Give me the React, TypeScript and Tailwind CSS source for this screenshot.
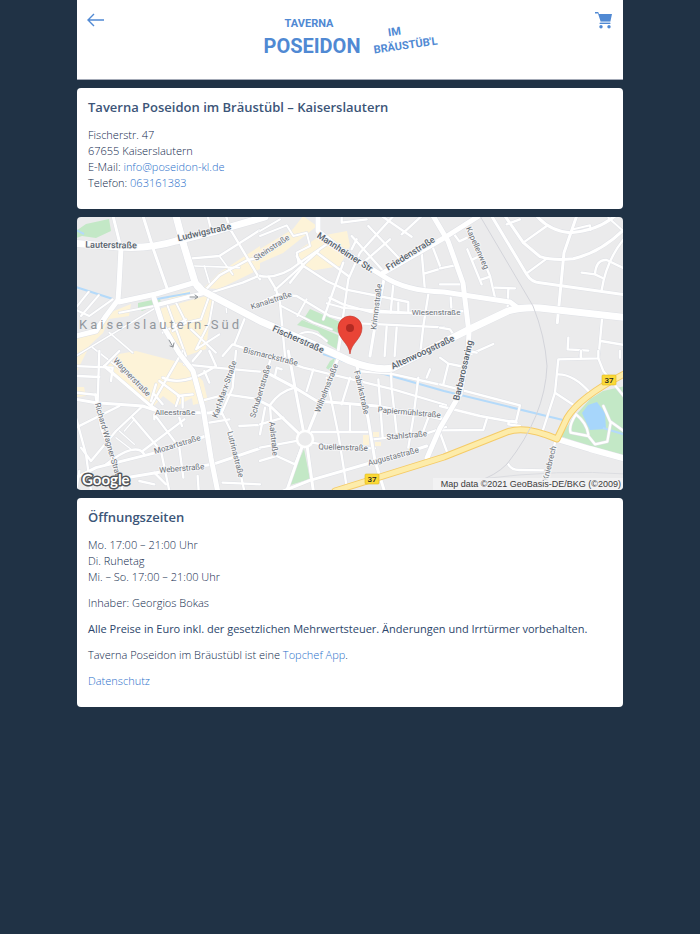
import type { ReactNode } from "react";

type Road = [d: string, width?: number];

type Tile = { x: number; y: number; roads: Road[] };

type Label = {
  text: string;
  x: number;
  y: number;
  rotate?: number;
  major?: boolean;
};

const MAIN_ROADS: Road[] = [
  ["M70 242L119 246Q150 248 176 240L216 230L265 216", 7],
  ["M121 247L119 285L118 299L106 315L96 330L76 335", 5],
  ["M119 301L156 293L193 282Q199 282 203 290", 5],
  ["M176 215L184 245L194 278Q196 286 203 290L260 320L333 352L350 360Q375 370 393 367L440 343L470 328L508 310Q522 306 540 307L630 317", 7],
  ["M318 215L318 230L340 248L383 275Q405 290 444 291L510 301L518 307", 5],
  ["M383 272L444 237L482 213", 5],
  ["M432 213L448 240L463 282L469 332L468 350L460 393L440 427L427 457", 5],
  ["M154 297L163 325L179 352L193 370L203 407L211 457L218 492", 5],
  ["M157 304L204 292", 4],
  ["M113 215L121 247", 3],
  ["M143 215L154 250L168 290", 3],
  ["M557 438L590 448L630 459", 6],
  ["M357 365L368 417L375 460L385 492", 3],
];

// Side streets, each tile drawn on a grid three times finer than the map
const TILES: Tile[] = [
  {
    x: 76,
    y: 215,
    roads: [
      ["M340 128L430 120L552 42"],
      ["M460 35L552 190"],
      ["M395 0L405 40M450 0L465 45"],
      ["M355 150L490 155M385 150L400 200M430 120L470 175", 5],
      ["M390 220L430 178L515 132L552 125"],
      ["M410 228L500 200L552 178"],
      ["M0 275L38 228M15 300L68 238M0 282L40 300L110 250", 6],
      ["M130 290L235 270", 6],
      ["M0 420L240 275M100 350L170 410M50 395L160 480", 5],
      ["M275 270L330 420M300 260L330 320L375 310L400 240M330 320L290 345M345 340L420 410M260 350L330 310", 6],
      ["M440 420L470 385L552 412M505 310L475 385"],
      ["M415 235L400 320L360 400L430 355", 6],
      ["M450 270L452 290", 4],
    ],
  },
  {
    x: 260,
    y: 215,
    roads: [
      ["M0 180Q60 190 120 140L200 85"],
      ["M25 182L48 220L60 260L75 420"],
      ["M0 260L55 235L110 240L210 300L300 322L552 334"],
      ["M45 222L175 105"],
      ["M130 150L200 195L255 220L445 258L445 290"],
      ["M190 310L225 210L250 140"],
      ["M248 310L265 190L300 110L400 0"],
      ["M208 245L250 265L330 288L455 291"],
      ["M245 275L445 290M200 262L250 275", 6],
      ["M275 60L365 160M325 30L420 130M290 70L275 100"],
      ["M245 0L245 20L320 10M365 0L455 62M425 55L485 0M390 70L310 140"],
      ["M372 190L345 330L330 420", 9],
      ["M400 205L392 290M415 260L415 290"],
      ["M380 332L374 420M410 335L404 420M505 235L490 330L480 420"],
      ["M485 108L495 225M515 85L540 150M495 172L552 155"],
      ["M250 310L232 420", 9],
      ["M60 268L160 320L215 340M140 250L112 300M110 360Q150 330 200 375", 6],
      ["M170 110L265 180M90 200L130 150L110 120"],
      ["M0 60L80 28L100 60L140 50L150 90L110 110L115 140", 6],
      ["M0 45L60 10", 6],
    ],
  },
  {
    x: 440,
    y: 215,
    roads: [
      ["M155 0L260 175Q275 200 300 200L558 237", 9],
      ["M195 0L250 80L300 122Q340 135 400 128Q480 110 550 42", 9],
      ["M260 172L320 128M250 80L320 30M200 25L240 10"],
      ["M290 0Q330 45 390 50Q470 45 525 0", 9],
      ["M410 0L372 110L352 320", 9],
      ["M555 65Q500 130 485 222"],
      ["M425 170L465 175Q468 130 500 132L558 160M465 175L488 186"],
      ["M505 5L550 45M400 40L450 28L452 42", 6],
      ["M75 20L110 85L150 180L165 245M35 45L58 76L82 65"],
      ["M82 100L125 205M98 130L120 120M125 190L150 182M165 215L225 217M205 217L203 275"],
      ["M0 157L45 148M0 205L68 205M32 245L34 275M60 285L82 287"],
      ["M0 335L30 340L40 355M90 415L160 384"],
      ["M385 365L383 400L445 404M425 404L420 420M486 310L475 430M483 375L558 388"],
    ],
  },
  {
    x: 76,
    y: 350,
    roads: [
      ["M85 45L225 165L255 185", 9],
      ["M0 145L60 155L200 165L250 182L400 186L440 175", 9],
      ["M85 45L130 0M0 75L70 78M70 0L65 150M0 125L65 132M0 45L110 50L105 90"],
      ["M375 150L450 130L552 145M325 40L420 50L552 62M260 80Q320 110 420 45L400 0"],
      ["M0 380L60 350L240 305L390 255", 9],
      ["M150 380L240 365L410 340L552 292", 9],
      ["M200 165L120 240L45 330L15 290M0 200L30 310L45 420M0 230L130 165"],
      ["M235 190L310 290L322 380M235 190L235 205M310 200L318 225"],
      ["M58 130L75 230L130 380L140 420"],
      ["M170 200L255 300L280 420M90 340Q180 270 205 310M200 300L325 205"],
      ["M130 240L175 280M120 260L165 295M175 205L145 240", 4],
      ["M435 180L465 240L505 420"],
      ["M480 0L470 110L435 190M400 215L460 205M490 225L552 222"],
      ["M225 165L320 0M250 90L310 135L300 165M235 130L260 160M305 135L350 130M225 150L240 100M320 140L320 170"],
      ["M0 420L10 360M190 390L235 400M235 365L270 400M365 375L368 420M440 395L552 400"],
      ["M385 60L400 95M375 0L350 30"],
    ],
  },
  {
    x: 260,
    y: 350,
    roads: [
      ["M0 5L130 50L400 115L558 162"],
      ["M290 60L392 68L558 105"],
      ["M135 265L105 110L85 0", 9],
      ["M135 265L210 80L235 20", 9],
      ["M135 265L30 165L0 150", 9],
      ["M135 265L0 290"],
      ["M155 243L330 243M155 275L250 290L345 292"],
      ["M125 290L80 420M142 290L160 420", 9],
      ["M70 420L150 388L330 336L440 305L500 285", 9],
      ["M200 80L235 250L262 420"],
      ["M30 70L105 110L170 150L350 165L552 205", 9],
      ["M160 55L140 120M270 80L245 160M270 165L270 243"],
      ["M355 85L368 260M393 65L395 110L410 245M475 80L460 200L445 290M510 55L500 80M505 200L490 240"],
      ["M340 265L500 247L558 228"],
      ["M30 165L40 300L50 315L105 340L125 290M0 330L50 315M0 220L70 200M30 162Q60 120 105 110"],
      ["M30 30L0 130M45 75L50 50L65 55M0 250L15 170"],
    ],
  },
  {
    x: 440,
    y: 350,
    roads: [
      ["M0 100L240 163L228 212Q205 205 205 220L240 225"],
      ["M0 165L120 195L230 215M0 238L130 237L140 205M0 245L20 300"],
      ["M308 240L345 125L355 25L475 22L475 0M423 0L423 22"],
      ["M475 22L490 60L562 148M352 70Q400 68 450 125M345 125L410 168"],
      ["M205 340Q215 358 240 357L310 358M345 275L325 350L312 420"],
      ["M0 20L25 38L60 45M25 38L10 100M85 0L110 5M540 0L540 20"],
      ["M408 190Q385 225 392 245L445 255L465 280L502 272L512 215L490 165M408 190Q440 215 445 250M512 212L558 245"],
    ],
  },
];

const HIGHWAY = "M335 490L444 456L507 431Q525 424 557 438L567 417Q580 395 630 370";

const LABELS: Label[] = [
  { text: "Lauterstraße", x: 111, y: 247, rotate: 1, major: true },
  { text: "Ludwigstraße", x: 205, y: 234, rotate: -13, major: true },
  { text: "Mannheimer Str.", x: 344, y: 254, rotate: 33, major: true },
  { text: "Friedenstraße", x: 412, y: 255, rotate: -32, major: true },
  { text: "Fischerstraße", x: 297, y: 341, rotate: 24, major: true },
  { text: "Altenwoogstraße", x: 424, y: 354, rotate: -25, major: true },
  { text: "Barbarossaring", x: 466, y: 370, rotate: -77, major: true },
  { text: "Steinstraße", x: 273, y: 249, rotate: -33 },
  { text: "Kanalstraße", x: 272, y: 302, rotate: -18 },
  { text: "Krimmstraße", x: 379, y: 306, rotate: -83 },
  { text: "Wiesenstraße", x: 436, y: 314 },
  { text: "Kapellenweg", x: 475, y: 248, rotate: 66 },
  { text: "Bismarckstraße", x: 270, y: 358, rotate: 14 },
  { text: "Wagnerstraße", x: 130, y: 378, rotate: 46 },
  { text: "Karl-Marx-Straße", x: 227, y: 389, rotate: -71 },
  { text: "Schubertstraße", x: 263, y: 391, rotate: -73 },
  { text: "Wilhelmstraße", x: 329, y: 388, rotate: -69 },
  { text: "Fabrikstraße", x: 359, y: 392, rotate: 77 },
  { text: "Alleestraße", x: 175, y: 414 },
  { text: "Papiermühlstraße", x: 409, y: 414, rotate: 5 },
  { text: "Stahlstraße", x: 407, y: 437, rotate: -5 },
  { text: "Quellenstraße", x: 343, y: 449, rotate: 2 },
  { text: "Augustastraße", x: 394, y: 458, rotate: -15 },
  { text: "Aalstraße", x: 271, y: 438, rotate: 84 },
  { text: "Mozartstraße", x: 178, y: 446, rotate: -17 },
  { text: "Weberstraße", x: 182, y: 470, rotate: -5 },
  { text: "Lutrinastraße", x: 233, y: 454, rotate: 76 },
  { text: "Richard-Wagner-Straße", x: 106, y: 442, rotate: 74 },
  { text: "Kniebrech", x: 552, y: 463, rotate: -76 },
];

function Roads({ roads, edge = 1 }: { roads: Road[]; edge?: number }) {
  return (
    <>
      {roads.map(([d, width = 7]) => (
        <path key={`${d}-edge`} d={d} stroke="#dfe1e6" strokeWidth={width + edge} />
      ))}
      {roads.map(([d, width = 7]) => (
        <path key={d} d={d} stroke="#fff" strokeWidth={width} />
      ))}
    </>
  );
}

function Shield({ x, y }: { x: number; y: number }) {
  return (
    <g>
      <rect x={x - 7} y={y - 5} width="14" height="10" rx="1" fill="#fbd937" stroke="#dfb91d" strokeWidth=".6" />
      <text x={x} y={y + 3} textAnchor="middle" fontSize="8" fontWeight="500" fill="#222">
        37
      </text>
    </g>
  );
}

function CityMap() {
  return (
    <svg
      viewBox="77 216 546 273"
      role="img"
      aria-label="Karte: Fischerstr. 47, Kaiserslautern"
      className="block w-full rounded-[4px] bg-[#ebebec] font-['Roboto',sans-serif] font-normal"
    >
      <g fill="#fdf3d8">
        <path d="M76 335L96 328L109 312L131 303L129 315L109 318L103 332L90 344L76 372Z" />
        <path d="M204 287L219 272L260 245L260 268L219 288Z" />
        <path d="M159 308L213 293L206 348L186 355L168 330Z" />
        <path d="M168 296L190 289L188 294L170 300Z" />
        <path d="M119 353L136 350L186 363L203 380L208 400L193 404L192 397L176 405L163 395L153 406L106 367Z" />
        <path d="M76 386L84 386L86 395L76 396Z" />
        <path d="M260 248L293 228L303 215L317 225L283 252L260 262Z" />
        <path d="M300 248L320 235L347 230L350 245L340 265L310 270L297 260Z" />
        <path d="M363 434H369V444H363ZM373 431H379V436H373ZM375 441H381V445H375Z" />
      </g>
      <g fill="#c3e8c6">
        <path d="M76 230L86 223L109 218L111 230L96 237L82 235L76 237Z" />
        <path d="M138 302L152 299L160 298L161 302L142 310L138 307Z" />
        <path d="M310 308L340 321L338 332L331 329L303 319Z" />
        <path d="M302 319L338 334L338 349L328 343L318 330L297 324Z" />
        <path d="M330 360L335 357L331 370L326 367Z" />
        <path d="M304 448L310 478L287 485Z" />
        <path d="M560 435L575 415L590 398L603 390L630 384L630 457L596 448Z" />
      </g>
      <path d="M582 412L588 404L597 401L605 412L606 428L590 429L586 421Z" fill="#a7d6fb" />
      <path
        d="M76 286L113 298M157 298L190 292M323 353L370 369L444 390L563 419M603 427L626 434M76 229L84 233"
        fill="none"
        stroke="#b4dafa"
        strokeWidth="2"
      />
      <g fill="none" strokeLinecap="round" strokeLinejoin="round">
        {TILES.map((tile, i) => (
          <g key={i} transform={`translate(${tile.x} ${tile.y}) scale(.3333)`}>
            <Roads roads={tile.roads} edge={3} />
          </g>
        ))}
        <Roads roads={MAIN_ROADS} />
        <circle cx="305" cy="438" r="8" fill="#ebebec" stroke="#fff" strokeWidth="2.5" />
        <path d={HIGHWAY} stroke="#f5cb67" strokeWidth="7" />
        <path d={HIGHWAY} stroke="#fdecaa" strokeWidth="5" />
        <path d="M480 215L533 305Q545 335 547 365Q545 415 507 463Q495 475 478 480" stroke="#d3d4da" />
        <path d="M480 478Q560 468 626 473" stroke="#dcdde1" />
        <path d="M190 296H197M195 294L198 296L195 298M169 339L173 346M170 345L173 346L174 342" stroke="#8c9196" />
      </g>
      <g textAnchor="middle" stroke="#f6f6f7" strokeWidth="2" strokeLinejoin="round" paintOrder="stroke">
        {LABELS.map(({ text, x, y, rotate = 0, major }) => (
          <text
            key={text}
            transform={`translate(${x} ${y}) rotate(${rotate})`}
            fontSize={major ? 9 : 8}
            fontWeight={major ? 500 : 400}
            fill={major ? "#56626c" : "#6b7178"}
          >
            {text}
          </text>
        ))}
      </g>
      <text x="79" y="328" fontSize="13" letterSpacing="3" fill="#92979d">
        Kaiserslautern-Süd
      </text>
      <Shield x={609} y={379} />
      <Shield x={372} y={478} />
      <path
        d="M350 353C349 342 338 338 338 327A12 12 0 0 1 362 327C362 338 351 342 350 353Z"
        fill="#e94436"
        stroke="#c23328"
        strokeWidth=".6"
      />
      <circle cx="350" cy="327" r="4" fill="#b22a22" />
      <rect x="433" y="477" width="190" height="12" fill="#f4f4f5" opacity=".8" />
      <text x="621" y="486" textAnchor="end" fontSize="9" fill="#3b3b3b" className="font-['Liberation_Sans',sans-serif]">
        Map data ©2021 GeoBasis-DE/BKG (©2009)
      </text>
      <text
        x="82"
        y="484"
        fontSize="15"
        fill="#fff"
        stroke="#54575b"
        strokeWidth="3"
        strokeLinejoin="round"
        paintOrder="stroke"
        className="font-['Lato',sans-serif] font-bold"
      >
        Google
      </text>
    </svg>
  );
}

function Logo() {
  return (
    <svg
      viewBox="0 0 180 44"
      role="img"
      aria-label="Taverna Poseidon im Bräustüb'l"
      className="h-11 w-45 font-['Roboto',sans-serif] font-bold"
      fill="#5089d3"
      textAnchor="middle"
    >
      <text x="49" y="13" fontSize="11">
        TAVERNA
      </text>
      <text x="52" y="39" fontSize="20">
        POSEIDON
      </text>
      <g transform="translate(145 28) rotate(-8)" fontSize="11">
        <text x="-9" y="-8">
          IM
        </text>
        <text x="0" y="7">
          BRÄUSTÜB'L
        </text>
      </g>
    </svg>
  );
}

function CartIcon() {
  return (
    <svg viewBox="0 0 17 17" className="size-[17px]" fill="currentColor">
      <path d="M0 0H3.200L4 2H17L15.400 9.400H5.600L3 1.400H0Z" />
      <path d="M5.600 9.400H15.400L15 10.800H5.200Z" opacity=".35" />
      <path d="M4.600 10.800H15.400V12H4.600Z" />
      <circle cx="6" cy="14.800" r="1.700" />
      <circle cx="14" cy="14.800" r="1.700" />
    </svg>
  );
}

function Header() {
  return (
    <header className="flex h-20 items-start justify-between border-b border-[#a3a9b6] bg-white px-2.5 pt-2.5 text-[#5089d3]">
      <button type="button" aria-label="Zurück" className="flex size-5 items-center">
        <svg viewBox="0 0 18 14" className="h-3.5 w-4.5" fill="none" stroke="currentColor" strokeWidth="1.4">
          <path d="M17 7H2M7 1L1 7L7 13" />
        </svg>
      </button>
      <div className="pt-1">
        <Logo />
      </div>
      <button type="button" aria-label="Warenkorb" className="flex size-5 items-center justify-center">
        <CartIcon />
      </button>
    </header>
  );
}

function Card({ title, children }: { title: string; children: ReactNode }) {
  return (
    <section className="rounded-[4px] bg-white px-[11px] pt-2.5 pb-[18px]">
      <h2 className="mb-[11px] text-[13px] leading-[18px] font-semibold text-[#3c5578]">{title}</h2>
      {children}
    </section>
  );
}

function TextLink({ href, children }: { href: string; children: ReactNode }) {
  return (
    <a href={href} className="text-[#2a6fca]">
      {children}
    </a>
  );
}

export default function App() {
  return (
    <div className="min-h-screen bg-[#203245] font-['Open_Sans',sans-serif] text-[11px] leading-4 font-light text-[#10284c]">
      <div className="mx-auto flex w-[78%] flex-col gap-2">
        <Header />
        <main className="flex flex-col gap-2">
          <Card title="Taverna Poseidon im Bräustübl – Kaiserslautern">
            <address className="not-italic">
              <p>Fischerstr. 47</p>
              <p>67655 Kaiserslautern</p>
              <p>
                E-Mail: <TextLink href="mailto:info@poseidon-kl.de">info@poseidon-kl.de</TextLink>
              </p>
              <p>
                Telefon: <TextLink href="tel:063161383">063161383</TextLink>
              </p>
            </address>
          </Card>
          <CityMap />
          <Card title="Öffnungszeiten">
            <div className="flex flex-col gap-2.5">
              <div>
                <p>Mo. 17:00 – 21:00 Uhr</p>
                <p>Di. Ruhetag</p>
                <p>Mi. – So. 17:00 – 21:00 Uhr</p>
              </div>
              <p>Inhaber: Georgios Bokas</p>
              <p className="font-medium text-[#2c466b]">
                Alle Preise in Euro inkl. der gesetzlichen Mehrwertsteuer. Änderungen und Irrtürmer vorbehalten.
              </p>
              <p>
                Taverna Poseidon im Bräustübl ist eine <TextLink href="#topchef">Topchef App</TextLink>.
              </p>
              <p>
                <TextLink href="#datenschutz">Datenschutz</TextLink>
              </p>
            </div>
          </Card>
        </main>
      </div>
    </div>
  );
}
